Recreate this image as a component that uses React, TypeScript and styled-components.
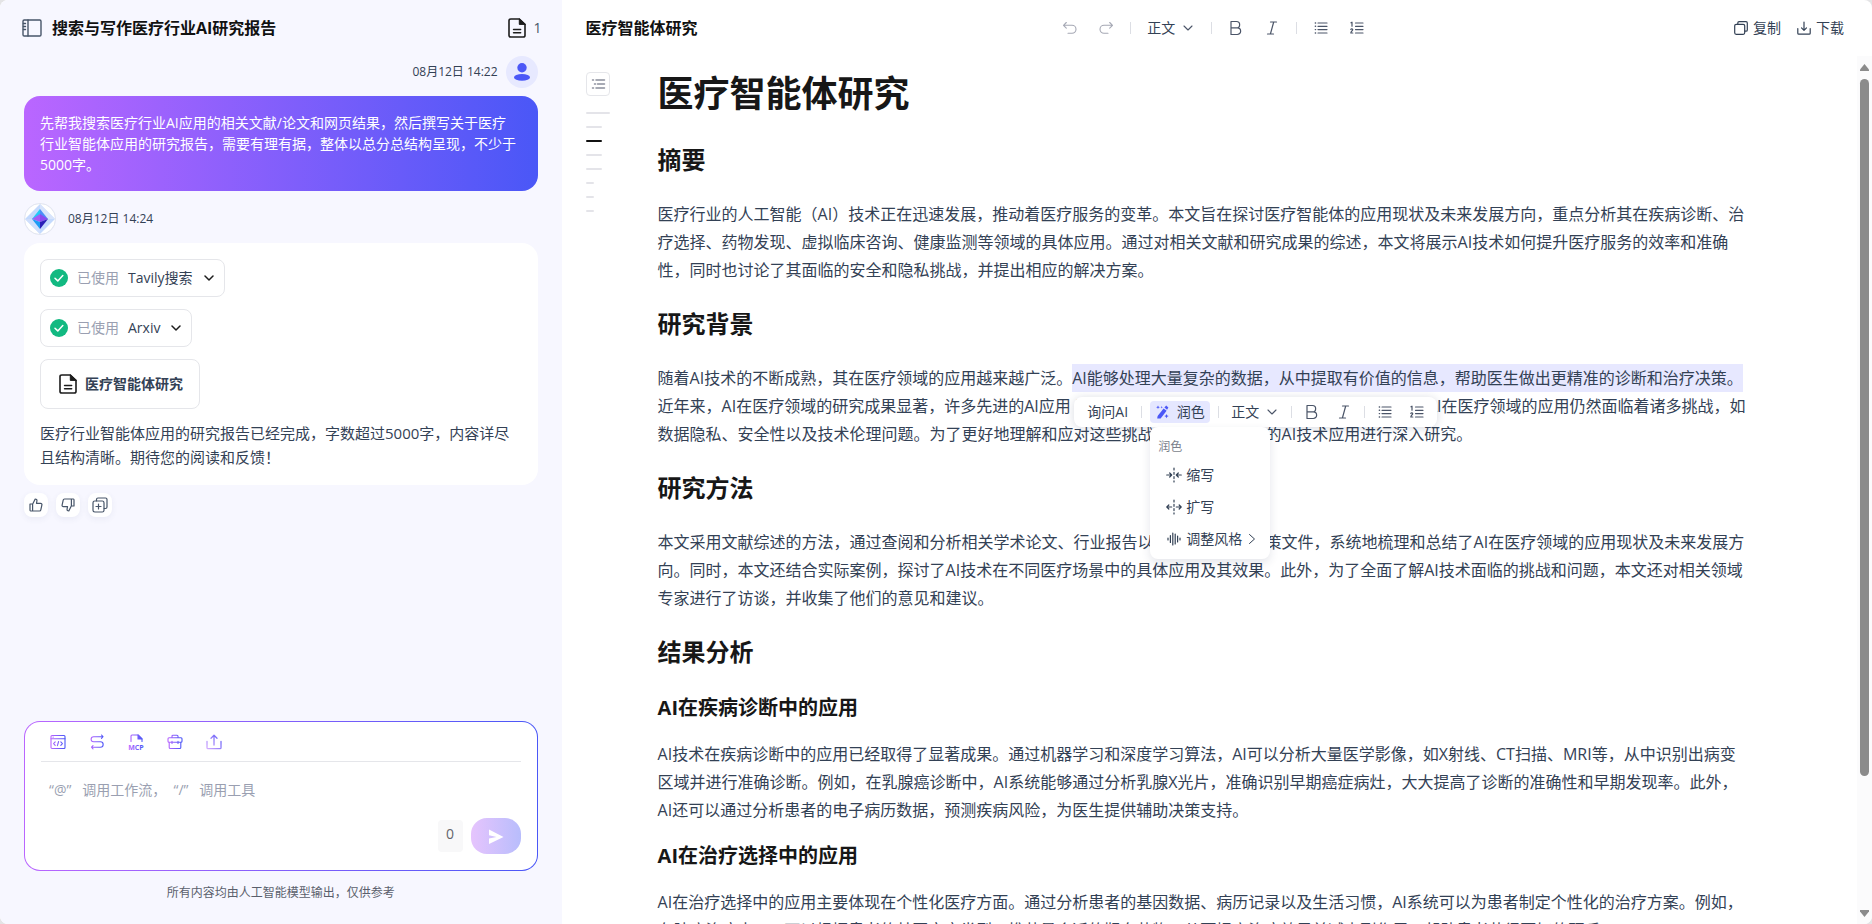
import React, { useId, useState } from "react";
import styled, { createGlobalStyle, css } from "styled-components";

const GlobalStyle = createGlobalStyle`
  *, *::before, *::after { box-sizing: border-box; }
  body {
    margin: 0;
    background: #e4e4e6;
    color: #334155;
    font-family: "Open Sans", "Noto Sans CJK SC", sans-serif;
    font-size: 14px;
    line-height: 20px;
  }
  button, select, textarea { font: inherit; color: inherit; }
  h1, h2, h3, p { margin: 0; }
  svg { display: block; flex: none; }
`;

/* ---------- layout ---------- */

const Shell = styled.div`
  display: flex;
  height: 100vh;
  border-radius: 8px;
  overflow: hidden;
  background: #ffffff;
`;

const ChatPanel = styled.aside`
  display: flex;
  flex-direction: column;
  flex: 0 0 30%;
  min-width: 0;
  background: #f7f7ff;
`;

const DocPanel = styled.main`
  display: flex;
  flex-direction: column;
  flex: 1;
  min-width: 0;
`;

/* ---------- chat ---------- */

const ChatHeader = styled.header`
  display: flex;
  align-items: center;
  gap: 10px;
  height: 56px;
  flex: none;
  padding: 0 20px 0 22px;
`;

const PanelTitle = styled.h2`
  font-size: 16px;
  line-height: 24px;
  font-weight: 700;
  color: #111111;
  white-space: nowrap;
`;

const PlainButton = styled.button`
  display: inline-flex;
  align-items: center;
  justify-content: center;
  gap: 8px;
  padding: 0;
  border: 0;
  background: none;
  cursor: pointer;
`;

const FileCount = styled(PlainButton)`
  margin-left: auto;
  color: #475569;
`;

const Messages = styled.section`
  display: flex;
  flex-direction: column;
  flex: 1;
  min-height: 0;
  padding: 0 24px;
  overflow: hidden;
`;

const MessageMeta = styled.div<{ $own?: boolean }>`
  display: flex;
  align-items: center;
  flex: none;
  gap: ${(p) => (p.$own ? "8px" : "12px")};
  justify-content: ${(p) => (p.$own ? "flex-end" : "flex-start")};
  margin: ${(p) => (p.$own ? "0 0 8px" : "12px 0 8px")};
  font-size: 12px;
`;

const Avatar = styled.span`
  display: grid;
  place-items: center;
  width: 32px;
  height: 32px;
  border-radius: 50%;
  background: #e7e9ff;
`;

const UserBubble = styled.p`
  flex: none;
  padding: 16px 20px 16px 16px;
  border-radius: 16px;
  background: linear-gradient(90deg, #ba66ff, #4a57f7);
  color: #ffffff;
  line-height: 21px;
`;

const AnswerCard = styled.article`
  display: flex;
  flex-direction: column;
  align-items: flex-start;
  flex: none;
  gap: 12px;
  padding: 16px;
  border-radius: 16px;
  background: #ffffff;
`;

const ToolChip = styled.button`
  display: flex;
  align-items: center;
  gap: 9px;
  height: 38px;
  padding: 0 10px 0 9px;
  border: 1px solid #e5e6ea;
  border-radius: 8px;
  background: #ffffff;
  cursor: pointer;
  > svg:last-child { margin-left: 2px; }
`;

const Muted = styled.span`
  color: #9a9fb1;
`;

const FileChip = styled(ToolChip)`
  gap: 8px;
  height: 50px;
  padding: 0 16px 0 18px;
  font-weight: 700;
`;

const AnswerText = styled.p`
  font-size: 15px;
  line-height: 24px;
`;

const Actions = styled.div`
  display: flex;
  gap: 8px;
  padding-top: 8px;
`;

const ActionButton = styled(PlainButton)`
  width: 24px;
  height: 24px;
  border-radius: 8px;
  background: #ffffff;
  color: #475569;
  box-shadow: 0 2px 6px rgba(60, 70, 130, 0.07);
`;

const Composer = styled.form`
  display: flex;
  flex-direction: column;
  flex: none;
  height: 150px;
  margin: 0 24px;
  padding: 0 16px 16px;
  border: 1px solid transparent;
  border-radius: 16px;
  background: linear-gradient(#ffffff, #ffffff) padding-box,
    linear-gradient(90deg, #ba66ff, #4a57f7) border-box;
`;

const ComposerTools = styled.div`
  display: flex;
  align-items: center;
  gap: 15px;
  height: 40px;
  flex: none;
  padding-left: 5px;
  border-bottom: 1px solid #e5e6ea;
`;

const ComposerTool = styled(PlainButton)`
  width: 24px;
  height: 24px;
`;

const Prompt = styled.textarea`
  flex: 1;
  min-height: 0;
  width: 100%;
  padding: 18px 8px 0;
  border: 0;
  outline: 0;
  resize: none;
  overflow: hidden;
  background: none;
  &::placeholder {
    color: #9a9fb1;
    opacity: 1;
  }
`;

const ComposerFooter = styled.div`
  display: flex;
  justify-content: flex-end;
  align-items: center;
  gap: 8px;
  flex: none;
`;

const Counter = styled.output`
  display: grid;
  justify-items: center;
  width: 25px;
  height: 32px;
  padding-top: 4px;
  border-radius: 4px;
  background: #f8f8f9;
  color: #64656c;
`;

const SendButton = styled(PlainButton)`
  width: 50px;
  height: 36px;
  border-radius: 16px;
  background: linear-gradient(90deg, #e6c4fd, #b8bdfc);
  color: #ffffff;
`;

const Disclaimer = styled.p`
  flex: none;
  padding: 12px 24px 21px;
  font-size: 12px;
  text-align: center;
  color: #5a5f6c;
`;

/* ---------- document ---------- */

const DocHeader = styled.header`
  display: flex;
  align-items: center;
  justify-content: space-between;
  height: 56px;
  flex: none;
  padding: 0 24px;
`;

const Tools = styled.div<{ $gap: number }>`
  display: flex;
  align-items: center;
  gap: ${(p) => p.$gap}px;
`;

const IconButton = styled(PlainButton)<{ $dim?: boolean }>`
  width: 24px;
  height: 24px;
  color: ${(p) => (p.$dim ? "#a5a8b4" : "#4b5568")};
`;

const Divider = styled.span`
  width: 1px;
  height: 12px;
  background: #dcdee4;
`;

const SelectWrap = styled.label`
  display: grid;
  align-items: center;
  width: 56px;
  color: #334155;
  > * { grid-area: 1 / 1; }
  > svg {
    justify-self: end;
    margin-right: 6px;
    pointer-events: none;
  }
`;

const StyleSelect = styled.select`
  width: 100%;
  height: 24px;
  padding: 0 0 0 4px;
  border: 0;
  outline: 0;
  background: none;
  appearance: none;
  cursor: pointer;
`;

const TextButton = styled(PlainButton)`
  gap: 5px;
  min-width: 51px;
  height: 24px;
  padding: 0 4px;
  white-space: nowrap;
`;

const DocBody = styled.div`
  display: flex;
  flex: 1;
  min-height: 0;
`;

const DocScroll = styled.div`
  display: flex;
  align-items: flex-start;
  flex: 1;
  min-width: 0;
  gap: 48px;
  padding: 16px 109px 0 24px;
  overflow: hidden;
`;

const Outline = styled.nav`
  display: flex;
  flex-direction: column;
  flex: none;
  width: 24px;
`;

const OutlineToggle = styled(PlainButton)`
  width: 24px;
  height: 24px;
  margin-bottom: 10px;
  border: 1px solid #e5e6ea;
  border-radius: 4px;
  color: #8b8f9c;
`;

const OutlineLink = styled.a<{ $level: 1 | 2 | 3; $active?: boolean }>`
  padding: 6px 0;
  width: ${(p) => ({ 1: 24, 2: 16, 3: 8 })[p.$level]}px;
  &::before {
    content: "";
    display: block;
    height: 2px;
    border-radius: 1px;
    background: ${(p) => (p.$active ? "#111111" : "#e4e4e9")};
  }
`;

const Article = styled.article`
  flex: 1;
  min-width: 0;
  padding-top: 2px;
  font-size: 16px;
  line-height: 28px;

  h1, h2, h3 {
    font-weight: 700;
    color: #171717;
  }
  h1 {
    font-size: 36px;
    line-height: 40px;
    margin-bottom: 30px;
  }
  h2 {
    font-size: 24px;
    line-height: 32px;
    margin: 24px 0;
  }
  h3 {
    font-size: 20px;
    line-height: 32px;
    margin: 16px 0;
  }
`;

const Selection = styled.span`
  position: relative;
  padding: 3px 0;
  background: #e7e8ff;
`;

const popover = css`
  position: absolute;
  background: #ffffff;
  border-radius: 8px;
  font-size: 14px;
  line-height: 20px;
  box-shadow: 0 1px 8px rgba(40, 50, 90, 0.18);
`;

const FloatingBar = styled.span`
  ${popover}
  display: flex;
  align-items: center;
  gap: 8px;
  top: calc(100% + 5px);
  left: 2px;
  height: 30px;
  padding: 0 8px;
  white-space: nowrap;
  z-index: 2;
`;

const PolishWrap = styled.span`
  position: relative;
  display: flex;
`;

const PolishButton = styled(TextButton)`
  gap: 8px;
  height: 22px;
  width: 60px;
  border-radius: 4px;
  background: #e5e7ff;
`;

const Menu = styled.span`
  ${popover}
  display: flex;
  flex-direction: column;
  top: calc(100% + 4px);
  left: 0;
  width: 120px;
  padding: 8px 0 4px;
  box-shadow: 0 4px 10px rgba(40, 50, 90, 0.12);
`;

const MenuTitle = styled.span`
  padding: 0 8px;
  font-size: 12px;
  line-height: 24px;
  color: #7b7f8c;
`;

const MenuItem = styled(PlainButton)`
  justify-content: flex-start;
  gap: 4px;
  height: 32px;
  padding: 0 14px 0 16px;
  > svg:nth-child(3) { margin-left: auto; }
`;

const ScrollTrack = styled.div`
  display: flex;
  flex-direction: column;
  align-items: center;
  flex: none;
  width: 15px;
  padding: 8px 0 7px;
  gap: 8px;
  background: #fbfbfc;
  color: #8b8b8b;
`;

const ScrollThumb = styled.span`
  flex: 697;
  width: 9px;
  border-radius: 5px;
  background: #8b8b8b;
`;

const ScrollRest = styled.span`
  flex: 118;
`;

/* ---------- icons ---------- */

type IconProps = { size?: number; w?: number; h?: number; sw?: number; box?: string; children: React.ReactNode };

const Icon = ({ size = 16, w, h, sw = 1, box = "0 0 16 16", children }: IconProps) => (
  <svg
    width={w ?? size}
    height={h ?? size}
    viewBox={box}
    fill="none"
    stroke="currentColor"
    strokeWidth={sw}
    strokeLinecap="round"
    strokeLinejoin="round"
    aria-hidden="true"
  >
    {children}
  </svg>
);

const GradientIcon = ({ fade, children }: { fade?: boolean; children: (paint: string) => React.ReactNode }) => {
  const id = useId();
  return (
    <svg width="16" height="16" viewBox="0 0 16 16" fill="none" stroke={`url(#${id})`} strokeWidth="1.1" strokeLinejoin="round" strokeLinecap="round" aria-hidden="true">
      <defs>
        <linearGradient id={id} gradientUnits="userSpaceOnUse" x1="1" y1={fade ? 16 : 8} x2="15" y2={fade ? 4 : 8}>
          <stop offset="0" stopColor={fade ? "#d9b0ff" : "#b966ff"} />
          <stop offset="1" stopColor={fade ? "#6a62f8" : "#4a57f7"} />
        </linearGradient>
      </defs>
      {children(`url(#${id})`)}
    </svg>
  );
};

const SidebarIcon = () => (
  <Icon w={20} h={18} box="0 0 20 18" sw={1.4}>
    <g stroke="#475569">
      <rect x="1" y="1" width="18" height="16" rx="1.2" />
      <path d="M6 1v16" />
      <path d="M1.5 4.5h2M1.5 7.5h2M1.5 10.5h2" />
    </g>
  </Icon>
);

const FileIcon = () => (
  <Icon w={18} h={20} box="0 0 18 20" sw={1.6}>
    <g stroke="#1c1c1c">
      <path d="M11.3 1H2.8C1.8 1 1 1.7 1 2.6v14.8c0 .9.8 1.6 1.8 1.6h12.4c1 0 1.8-.7 1.8-1.6V6.4z" />
      <path d="M11.3 1.2v5.2H17z" fill="#1c1c1c" strokeWidth="1" />
      <path d="M5.6 11.5h7M5.6 14.8h7" />
    </g>
  </Icon>
);

const UserIcon = () => (
  <svg width="16" height="18" viewBox="0 0 16 18" fill="#4b57f7" aria-hidden="true">
    <circle cx="8" cy="4.7" r="4.7" />
    <ellipse cx="8" cy="14.4" rx="8" ry="3.3" />
  </svg>
);

const BotLogo = () => (
  <svg width="32" height="32" viewBox="0 0 32 32" aria-hidden="true">
    <circle cx="16" cy="16" r="15.5" fill="#ffffff" stroke="#e3e6ee" />
    <path d="M16 1 31 16 16 31 1 16z" fill="#c4dafd" />
    <path d="M16 1 31 16H16z" fill="#d8e4fb" />
    <path d="M1 16 16 31V16z" fill="#d0dffc" />
    <path d="M16 6 8 16h8z" fill="#22c9f5" />
    <path d="M16 6l8 10h-8z" fill="#4b8df8" />
    <path d="M16 11 8 16l8 3z" fill="#a45cf6" />
    <path d="M16 11l8 5-8 3z" fill="#8a4af0" />
    <path d="M8 16l8 10v-7z" fill="#1d9cf5" />
    <path d="M24 16l-8 10v-7z" fill="#2a1fb8" />
  </svg>
);

const CheckIcon = () => (
  <svg width="18" height="18" viewBox="0 0 18 18" aria-hidden="true">
    <circle cx="9" cy="9" r="9" fill="#12b981" />
    <path d="M5 9.2l2.8 2.7 5-5.3" fill="none" stroke="#ffffff" strokeWidth="1.5" strokeLinecap="round" strokeLinejoin="round" />
  </svg>
);

const ChevronDown = ({ sw = 1.1, color = "#4b5568" }: { sw?: number; color?: string }) => (
  <Icon size={10} box="0 0 10 10" sw={sw}>
    <path d="M1 3l4 4 4-4" stroke={color} />
  </Icon>
);

const ThumbUp = () => (
  <Icon size={16} sw={1.2}>
    <path d="M2 7h2.6v7H2.6A.8.8 0 0 1 2 13.3zM4.6 7.2 7.2 2c1.4 0 1.9.9 1.7 2l-.4 2.4h4.2c.8 0 1.4.7 1.2 1.5l-1.1 5c-.1.7-.7 1.1-1.3 1.1H4.6" />
  </Icon>
);

const ThumbDown = () => (
  <Icon size={16} sw={1.2}>
    <path d="M14 9h-2.6V2h2a.8.8 0 0 1 .6.7zM11.4 8.8 8.8 14c-1.4 0-1.9-.9-1.7-2l.4-2.4H3.3c-.8 0-1.4-.7-1.2-1.5l1.1-5c.1-.7.7-1.1 1.3-1.1h6.9" />
  </Icon>
);

const CopyPlus = () => (
  <Icon size={16} sw={1.2}>
    <rect x="1" y="4" width="11" height="11" rx="1.8" />
    <path d="M4.5 3.8V2.5c0-.8.6-1.5 1.5-1.5h7.5c.8 0 1.5.7 1.5 1.5V10c0 .9-.7 1.5-1.5 1.5h-1.3" />
    <path d="M6.5 7v5M4 9.5h5" />
  </Icon>
);

const SendIcon = () => (
  <svg width="16" height="16" viewBox="0 0 16 16" fill="#ffffff" aria-hidden="true">
    <path d="M1 1.5 15.5 9 1 16v-5.4L8.5 9 1 7.2z" />
  </svg>
);

const UndoIcon = () => (
  <Icon size={16} sw={1.1}>
    <path d="M4.3 2.5 1.5 5.3l2.8 2.8M1.8 5.3H10a4 4 0 0 1 0 8H6" />
  </Icon>
);

const RedoIcon = () => (
  <Icon size={16} sw={1.1}>
    <path d="M11.7 2.5l2.8 2.8-2.8 2.8M14.2 5.3H6a4 4 0 0 0 0 8h4" />
  </Icon>
);

const BoldIcon = () => (
  <Icon size={16} sw={1.2}>
    <path d="M3 1.5h5.5a3.1 3.1 0 0 1 0 6.3H3zM3 7.8h6.3a3.3 3.3 0 0 1 0 6.7H3z" />
  </Icon>
);

const ItalicIcon = () => (
  <Icon size={16} sw={1.2}>
    <path d="M6.5 2h6M3.5 14h6M9.7 2l-3.3 12" />
  </Icon>
);

const BulletIcon = () => (
  <Icon size={14} box="0 0 14 14" sw={1.2}>
    <path d="M4 2h9M4 5.3h9M4 8.6h9M4 12h9" />
    <path d="M1.3 2h.3M1.3 5.3h.3M1.3 8.6h.3M1.3 12h.3" strokeWidth="1.4" />
  </Icon>
);

const NumberIcon = () => (
  <Icon size={14} box="0 0 14 14" sw={1.2}>
    <path d="M5.5 2H13M5.5 5.3H13M5.5 8.6H13M5.5 12H13" />
    <path d="M1 1.8l1-.6v4M.8 8.4c.4-.8 2-.7 1.9.3C2.6 9.5.9 10.6.8 12h2" />
  </Icon>
);

const CopyIcon = () => (
  <Icon size={14} box="0 0 14 14" sw={1.2}>
    <rect x=".7" y="3.3" width="10" height="10" rx="1.5" />
    <path d="M3.8 3.2V2c0-.8.5-1.3 1.3-1.3H12c.8 0 1.3.5 1.3 1.3v6.9c0 .8-.5 1.3-1.3 1.3h-1.2" />
  </Icon>
);

const DownloadIcon = () => (
  <Icon size={14} box="0 0 14 14" sw={1.2}>
    <path d="M7 1v8M4.5 6.8 7 9.3l2.5-2.5M.8 7.5v4.7c0 .6.4 1 1 1h10.4c.6 0 1-.4 1-1V7.5" />
  </Icon>
);

const OutlineIcon = () => (
  <Icon w={16} h={12} box="0 0 16 12" sw={1.5}>
    <path d="M6 2h8.5M7.5 6h7M6 10h8.5M2.5 2h1M4.5 6h1M2.5 10h1" />
  </Icon>
);

const WandIcon = () => (
  <svg width="13" height="14" viewBox="0 0 13 14" fill="#4b57f7" aria-hidden="true">
    <path d="M7.6 3.6 10.6 5.8 4.6 13.4 1.2 13.6 1.6 11z" />
    <path d="M8.4 2.6 10.2.6l2.2 1.8-1.3 2.4z" />
    <path d="M2 .5l.6 1.300 1.300.5-1.300.5L2 4.100l-.6-1.300L.1 2.300l1.300-.5zM5.700 1l.4.900.9.300-.9.300-.4.900-.4-.9-.9-.3.900-.3zM10.500 9l.7 1.500 1.500.6-1.500.6-.7 1.500-.7-1.500-1.500-.6 1.500-.6z" />
  </svg>
);

const ShrinkIcon = () => (
  <Icon size={16} sw={1.2}>
    <path d="M8 1v14" strokeDasharray="2 2.3" />
    <path d="M.7 8h4.5M3.7 6l2 2-2 2M15.3 8h-4.5M12.3 6l-2 2 2 2" />
  </Icon>
);

const ExpandIcon = () => (
  <Icon size={16} sw={1.2}>
    <path d="M8 1v14" strokeDasharray="2 2.3" />
    <path d="M1 8h4.7M2.8 6l-2 2 2 2M15 8h-4.7M13.2 6l2 2-2 2" />
  </Icon>
);

const WaveIcon = () => (
  <Icon size={16} sw={1.2}>
    <path d="M2 7v2M4.4 4.5v7M6.8 2v12M9.2 3v10M11.6 5v6M14 7v2" />
  </Icon>
);

const CodeWindow = () => (
  <GradientIcon>
    {() => (
      <>
        <rect x="1" y="1.5" width="14" height="13" rx="1" />
        <path d="M1 4.7h14M5.2 7.8 3.6 9.6l1.6 1.8M10.8 7.8l1.6 1.8-1.6 1.8M8.6 7.5l-1.2 4.2M3 3.1h.2" />
      </>
    )}
  </GradientIcon>
);

const FlowIcon = () => (
  <GradientIcon>
    {() => (
      <path d="M12.5 1l1.5 1.7-1.5 1.6M13.5 2.7H4.6a2.5 2.5 0 0 0 0 5h6.8a2.7 2.7 0 0 1 0 5.5H2.8M4 11.6l-1.5 1.6L4 14.8" />
    )}
  </GradientIcon>
);

const McpIcon = () => (
  <GradientIcon>
    {(paint) => (
      <>
        <path d="M3 7.5V2c0-.6.4-1 1-1h6l4 4v2.5" />
        <path d="M10 1v4h4z" fill={paint} />
        <text x="8" y="15.5" textAnchor="middle" fontFamily="Open Sans, sans-serif" fontSize="7" fontWeight="700" fill={paint} stroke="none">
          MCP
        </text>
      </>
    )}
  </GradientIcon>
);

const ToolboxIcon = () => (
  <GradientIcon>
    {() => (
      <>
        <rect x="1" y="3.7" width="14" height="4.6" rx="1" />
        <path d="M2.2 8.5v5c0 .6.4 1 1 1h9.6c.6 0 1-.4 1-1v-5M5 3.5V2.3c0-.7.4-1.1 1-1.1h4c.6 0 1 .4 1 1.1v1.2M5 7.3v2.2M11 7.3v2.2" />
      </>
    )}
  </GradientIcon>
);

const UploadIcon = () => (
  <GradientIcon fade>
    {() => <path d="M8 11V1.5M5 4.2l3-3 3 3M1 7.5v6.2c0 .6.4 1 1 1h12c.6 0 1-.4 1-1V7.5" strokeWidth="1.3" />}
  </GradientIcon>
);

/* ---------- shared controls ---------- */

const BlockStyle = () => (
  <SelectWrap>
    <StyleSelect aria-label="段落样式" defaultValue="正文">
      <option>正文</option>
      <option>标题</option>
    </StyleSelect>
    <ChevronDown />
  </SelectWrap>
);

const FormatTools = () => (
  <>
    <BlockStyle />
    <Divider />
    <IconButton type="button" aria-label="加粗"><BoldIcon /></IconButton>
    <IconButton type="button" aria-label="斜体"><ItalicIcon /></IconButton>
    <Divider />
    <IconButton type="button" aria-label="无序列表"><BulletIcon /></IconButton>
    <IconButton type="button" aria-label="有序列表"><NumberIcon /></IconButton>
  </>
);

const SelectionToolbar = () => (
  <FloatingBar role="toolbar">
    <TextButton type="button">询问AI</TextButton>
    <Divider />
    <PolishWrap>
      <PolishButton type="button" aria-expanded="true"><WandIcon />润色</PolishButton>
      <Menu role="menu">
        <MenuTitle>润色</MenuTitle>
        <MenuItem type="button" role="menuitem"><ShrinkIcon /><span>缩写</span></MenuItem>
        <MenuItem type="button" role="menuitem"><ExpandIcon /><span>扩写</span></MenuItem>
        <MenuItem type="button" role="menuitem">
          <WaveIcon /><span>调整风格</span>
          <Icon w={8} h={12} box="0 0 8 12" sw={1}><path d="M1.5 1.5 6.5 6l-5 4.5" /></Icon>
        </MenuItem>
      </Menu>
    </PolishWrap>
    <Divider />
    <FormatTools />
  </FloatingBar>
);

const outline: { level: 1 | 2 | 3; label: string; active?: boolean }[] = [
  { level: 1, label: "医疗智能体研究" },
  { level: 2, label: "摘要" },
  { level: 2, label: "研究背景", active: true },
  { level: 2, label: "研究方法" },
  { level: 2, label: "结果分析" },
  { level: 3, label: "AI在疾病诊断中的应用" },
  { level: 3, label: "AI在治疗选择中的应用" },
  { level: 3, label: "AI在药物发现中的应用" },
];

/* ---------- page ---------- */

export default function App() {
  const [prompt, setPrompt] = useState("");

  return (
    <>
      <GlobalStyle />
      <Shell>
        <ChatPanel>
          <ChatHeader>
            <PlainButton type="button" aria-label="收起侧栏"><SidebarIcon /></PlainButton>
            <PanelTitle>搜索与写作医疗行业AI研究报告</PanelTitle>
            <FileCount type="button"><FileIcon />1</FileCount>
          </ChatHeader>

          <Messages>
            <MessageMeta $own>
              <time>08月12日 14:22</time>
              <Avatar><UserIcon /></Avatar>
            </MessageMeta>
            <UserBubble>
              先帮我搜索医疗行业AI应用的相关文献/论文和网页结果，然后撰写关于医疗行业智能体应用的研究报告，需要有理有据，整体以总分总结构呈现，不少于5000字。
            </UserBubble>
            <MessageMeta>
              <Avatar><BotLogo /></Avatar>
              <time>08月12日 14:24</time>
            </MessageMeta>
            <AnswerCard>
              <ToolChip type="button"><CheckIcon /><Muted>已使用</Muted>Tavily搜索<ChevronDown sw={1.5} color="#1c1c1c" /></ToolChip>
              <ToolChip type="button"><CheckIcon /><Muted>已使用</Muted>Arxiv<ChevronDown sw={1.5} color="#1c1c1c" /></ToolChip>
              <FileChip type="button"><FileIcon /><span>医疗智能体研究</span></FileChip>
              <AnswerText>医疗行业智能体应用的研究报告已经完成，字数超过5000字，内容详尽且结构清晰。期待您的阅读和反馈！</AnswerText>
            </AnswerCard>
            <Actions>
              <ActionButton type="button" aria-label="赞"><ThumbUp /></ActionButton>
              <ActionButton type="button" aria-label="踩"><ThumbDown /></ActionButton>
              <ActionButton type="button" aria-label="复制"><CopyPlus /></ActionButton>
            </Actions>
          </Messages>

          <Composer onSubmit={(e) => e.preventDefault()}>
            <ComposerTools>
              <ComposerTool type="button" aria-label="代码"><CodeWindow /></ComposerTool>
              <ComposerTool type="button" aria-label="工作流"><FlowIcon /></ComposerTool>
              <ComposerTool type="button" aria-label="MCP"><McpIcon /></ComposerTool>
              <ComposerTool type="button" aria-label="工具"><ToolboxIcon /></ComposerTool>
              <ComposerTool type="button" aria-label="上传"><UploadIcon /></ComposerTool>
            </ComposerTools>
            <Prompt
              aria-label="输入消息"
              placeholder={"“@”\u00a0\u00a0 调用工作流，\u00a0 “/”\u00a0\u00a0 调用工具"}
              value={prompt}
              onChange={(e) => setPrompt(e.target.value)}
            />
            <ComposerFooter>
              <Counter>{prompt.length}</Counter>
              <SendButton type="submit" aria-label="发送"><SendIcon /></SendButton>
            </ComposerFooter>
          </Composer>
          <Disclaimer>所有内容均由人工智能模型输出，仅供参考</Disclaimer>
        </ChatPanel>

        <DocPanel>
          <DocHeader>
            <PanelTitle>医疗智能体研究</PanelTitle>
            <Tools $gap={12} role="toolbar">
              <IconButton type="button" $dim aria-label="撤销"><UndoIcon /></IconButton>
              <IconButton type="button" $dim aria-label="重做"><RedoIcon /></IconButton>
              <Divider />
              <FormatTools />
            </Tools>
            <Tools $gap={8}>
              <TextButton type="button"><CopyIcon />复制</TextButton>
              <TextButton type="button"><DownloadIcon />下载</TextButton>
            </Tools>
          </DocHeader>

          <DocBody>
            <DocScroll>
              <Outline aria-label="目录">
                <OutlineToggle type="button" aria-label="展开目录"><OutlineIcon /></OutlineToggle>
                {outline.map((o) => (
                  <OutlineLink key={o.label} href="#" aria-label={o.label} $level={o.level} $active={o.active} />
                ))}
              </Outline>

              <Article>
                <h1>医疗智能体研究</h1>
                <h2>摘要</h2>
                <p>
                  医疗行业的人工智能（AI）技术正在迅速发展，推动着医疗服务的变革。本文旨在探讨医疗智能体的应用现状及未来发展方向，重点分析其在疾病诊断、治疗选择、药物发现、虚拟临床咨询、健康监测等领域的具体应用。通过对相关文献和研究成果的综述，本文将展示AI技术如何提升医疗服务的效率和准确性，同时也讨论了其面临的安全和隐私挑战，并提出相应的解决方案。
                </p>
                <h2>研究背景</h2>
                <div>
                  随着AI技术的不断成熟，其在医疗领域的应用越来越广泛。<Selection>AI能够处理大量复杂的数据，从中提取有价值的信息，帮助医生做出更精准的诊断和治疗决策。<SelectionToolbar /></Selection>近年来，AI在医疗领域的研究成果显著，许多先进的AI应用 已经在临床实践中取得了良好的效果。然而，当前AI在医疗领域的应用仍然面临着诸多挑战，如数据隐私、安全性以及技术伦理问题。为了更好地理解和应对这些挑战，有必要对现有的AI技术应用进行深入研究。
                </div>
                <h2>研究方法</h2>
                <p>
                  本文采用文献综述的方法，通过查阅和分析相关学术论文、行业报告以及国内外相关政策文件，系统地梳理和总结了AI在医疗领域的应用现状及未来发展方向。同时，本文还结合实际案例，探讨了AI技术在不同医疗场景中的具体应用及其效果。此外，为了全面了解AI技术面临的挑战和问题，本文还对相关领域专家进行了访谈，并收集了他们的意见和建议。
                </p>
                <h2>结果分析</h2>
                <h3>AI在疾病诊断中的应用</h3>
                <p>
                  AI技术在疾病诊断中的应用已经取得了显著成果。通过机器学习和深度学习算法，AI可以分析大量医学影像，如X射线、CT扫描、MRI等，从中识别出病变区域并进行准确诊断。例如，在乳腺癌诊断中，AI系统能够通过分析乳腺X光片，准确识别早期癌症病灶，大大提高了诊断的准确性和早期发现率。此外，AI还可以通过分析患者的电子病历数据，预测疾病风险，为医生提供辅助决策支持。
                </p>
                <h3>AI在治疗选择中的应用</h3>
                <p>
                  AI在治疗选择中的应用主要体现在个性化医疗方面。通过分析患者的基因数据、病历记录以及生活习惯，AI系统可以为患者制定个性化的治疗方案。例如，在肿瘤治疗中，AI可以根据患者的基因突变类型，推荐最合适的靶向药物，从而提高治疗效果并减少副作用，帮助患者获得更好的预后。
                </p>
              </Article>
            </DocScroll>
            <ScrollTrack aria-hidden="true">
              <svg width="9" height="7" viewBox="0 0 9 7"><path d="M4.5 0 9 5.5V7H0V5.5z" fill="currentColor" /></svg>
              <ScrollThumb />
              <ScrollRest />
              <svg width="9" height="7" viewBox="0 0 9 7"><path d="M4.5 7 9 1.5V0H0v1.5z" fill="currentColor" /></svg>
            </ScrollTrack>
          </DocBody>
        </DocPanel>
      </Shell>
    </>
  );
}
